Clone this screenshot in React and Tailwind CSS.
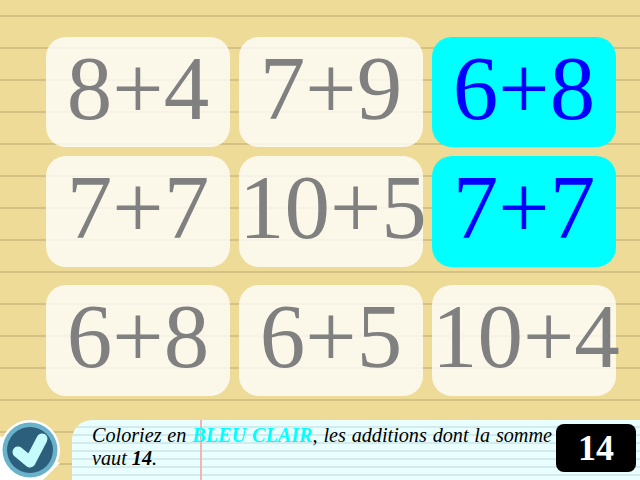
const cards = [
  [{ t: '8+4' }, { t: '7+9' }, { t: '6+8', on: true }],
  [{ t: '7+7' }, { t: '10+5' }, { t: '7+7', on: true }],
  [{ t: '6+8' }, { t: '6+5' }, { t: '10+4' }],
];

const Card = ({ t, on, tall }) => (
  <div
    className={`w-[184px] ${tall ? 'h-[111px]' : 'h-[110px]'} pb-[8px] rounded-[20px] flex items-center whitespace-nowrap text-[91px] leading-none ${
      on ? 'bg-[#00ffff] text-[#0000ff]' : 'bg-white/80 text-[#808080]'
    }`}
  >
    <span className="w-full text-center">{t}</span>
  </div>
);

const CheckBadge = () => (
  <svg width="64" height="64" viewBox="0 0 64 64" className="shrink-0">
    <polygon points="0,64 0,20 30,34 60,47 43,64" fill="#ffffff" />
    <circle cx="30" cy="34" r="30" fill="#ffffff" />
    <circle cx="30" cy="34" r="27.5" fill="#6ab2ca" />
    <circle cx="30" cy="34" r="23" fill="#2b5f7c" />
    <path d="M18 36 L30 46 L42 23" fill="none" stroke="#c6fbfd" strokeWidth="11" strokeLinecap="round" strokeLinejoin="round" />
  </svg>
);

export default function App() {
  return (
    <div className="w-[640px] h-[480px] overflow-hidden flex flex-col bg-[#eddb97] bg-[repeating-linear-gradient(180deg,#eddb97_0px,#eddb97_15px,#d4c184_15px,#d4c184_17px,#eddb97_17px,#eddb97_32px)] font-['Liberation_Serif',serif]">
      <div className="pt-[37px] pl-[46px] flex flex-col">
        <div className="flex gap-[9px]">
          {cards[0].map((c, i) => <Card key={i} {...c} />)}
        </div>
        <div className="flex gap-[9px] mt-[9px]">
          {cards[1].map((c, i) => <Card key={i} {...c} tall />)}
        </div>
        <div className="flex gap-[9px] mt-[18px]">
          {cards[2].map((c, i) => <Card key={i} {...c} tall />)}
        </div>
      </div>

      <div className="mt-auto flex items-end h-[64px]">
        <div className="w-[72px] shrink-0">
          <CheckBadge />
        </div>
        <div className="relative flex-1 h-[60px] rounded-tl-[20px] overflow-hidden bg-[#e9ffff] bg-[repeating-linear-gradient(180deg,#e9ffff_0px,#e9ffff_6px,#d3ebed_6px,#d3ebed_8px)] pl-[20px] pr-[88px] pt-[4px]">
          <div className="absolute left-[128px] top-0 bottom-0 w-[2px] bg-[#f0b4b4]" />
          <p className="relative text-[20.2px] leading-[23px] italic text-black text-justify">
            Coloriez en <b className="text-[#00ffff]">BLEU CLAIR</b>, les additions dont la somme vaut <b>14</b>.
          </p>
          <div className="absolute right-[4px] top-[4px] w-[80px] h-[48px] rounded-[8px] bg-black text-white font-bold text-[36px] flex items-center justify-center">
            14
          </div>
        </div>
      </div>
    </div>
  );
}
